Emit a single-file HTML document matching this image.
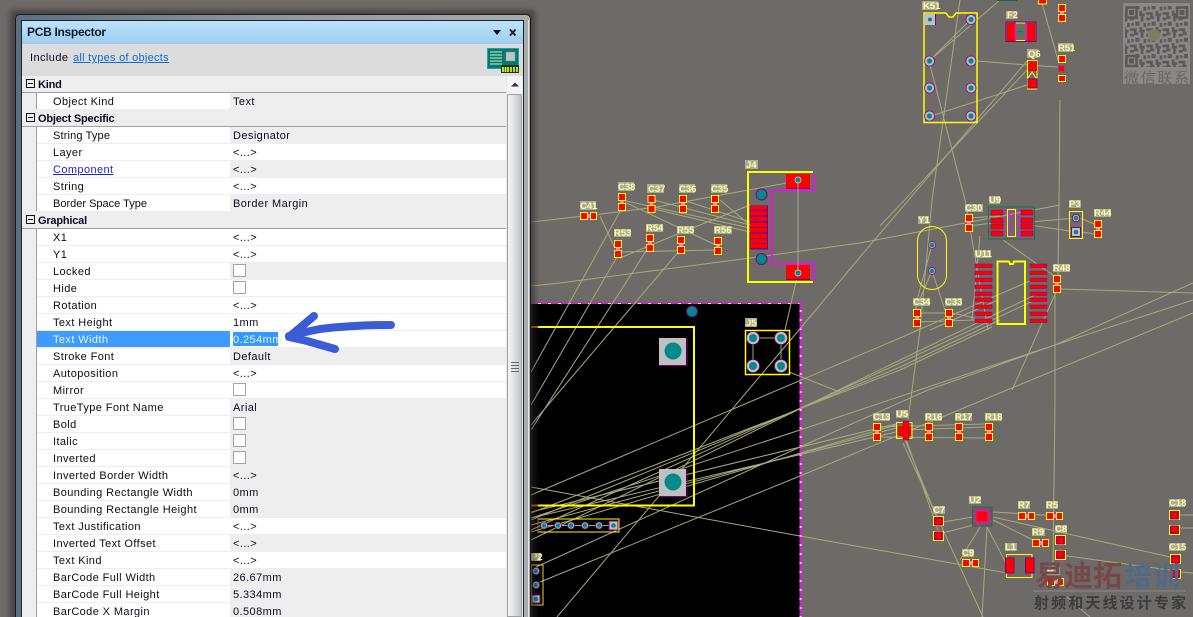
<!DOCTYPE html>
<html><head><meta charset="utf-8"><title>PCB Inspector</title>
<style>
html,body{margin:0;padding:0;width:1193px;height:617px;overflow:hidden;background:#6e6a68}
body{position:relative;font:11px/16px "Liberation Sans",sans-serif;color:#10081c}
div{position:absolute;box-sizing:border-box}
svg{position:absolute;left:0;top:0}
.r{left:37px;width:469px;height:17px;background:#fff;border-bottom:1px solid #eee}
.g{left:193px;right:0;top:0;height:16px;background:#eee;position:absolute}
.l{left:16px;top:1px;letter-spacing:.4px;white-space:nowrap}
.v{left:196px;top:1px;letter-spacing:.42px;white-space:nowrap}
.c{left:196px;top:1px;width:13px;height:13px;background:#fff;border:1px solid #a3a3a3}
.h{left:22px;width:484px;height:17px;background:#eee;border-bottom:1px solid #a0a0a0;font-weight:bold}
.h span{position:absolute;left:16px;top:1px;letter-spacing:-.2px}
.h i{position:absolute;left:4px;top:3px;width:9px;height:9px;border:1px solid #111;box-sizing:border-box}
.h i:after{content:"";position:absolute;left:1px;top:3px;width:5px;height:1px;background:#111}
.lb rect{fill:#aaaa96}
.lb text{fill:#ffffa0;font:bold 9.500px "Liberation Sans",sans-serif}
</style></head><body>

<svg width="1193" height="617" viewBox="0 0 1193 617">
<defs>
<g id="v"><rect x="1" y="6" width="6" height="6" fill="#a03a8a" stroke="#f0f"/><rect x=".5" y=".5" width="7" height="7" fill="#f00" stroke="#ff0"/><rect x=".5" y="10.500" width="7" height="7" fill="#f00" stroke="#ff0"/><path d="M2 9h4" stroke="#ffa"/></g>
<g id="h"><rect x="6" y="1" width="6" height="6" fill="#a03a8a" stroke="#f0f"/><rect x=".5" y=".5" width="7" height="7" fill="#f00" stroke="#ff0"/><rect x="10.500" y=".5" width="6" height="7" fill="#f00" stroke="#ff0"/><path d="M9 2v4" stroke="#ffa"/></g>
<g id="cv"><rect x=".5" y=".5" width="10" height="9" fill="#f00" stroke="#ff0"/><rect x=".5" y="15.500" width="10" height="9" fill="#f00" stroke="#ff0"/><rect x="2" y="2" width="7" height="7" fill="#f00" stroke="#800080"/><rect x="2" y="16" width="7" height="7" fill="#f00" stroke="#800080"/></g>
<g id="p"><circle r="5" fill="#bcbcbc" stroke="#900090" stroke-width=".8"/><circle r="2.600" fill="#008a8c"/></g>
<g id="b"><circle r="6.500" fill="#c0c0c0" stroke="#800080" stroke-width=".7"/><circle r="4" fill="#008a8c"/></g>
<g id="s"><circle r="3.500" fill="#bcbcbc" stroke="#900090" stroke-width=".8"/><circle r="2.300" fill="#008a8c"/></g>
<pattern id="qr" width="12" height="12" patternUnits="userSpaceOnUse" patternTransform="scale(1.35)">
<rect width="12" height="12" fill="#8b8987"/>
<path d="M0 0h3v2h-3zM5 0h2v4h-2zM9 1h3v2h-3zM1 4h3v3h-3zM7 5h2v3h-2zM10 5h2v2h-2zM0 9h2v3h-2zM4 8h2v2h-2zM4 10h4v2h-4zM9 9h3v2h-3z" fill="#5c5a58"/>
</pattern>
</defs>

<!-- board -->
<rect x="531" y="303" width="269" height="314" fill="#000"/>
<path d="M531 303.500H800" stroke="#d8d8d8" fill="none"/>
<path d="M531 303.500H800" stroke="#f0f" stroke-dasharray="7 3" fill="none"/>
<path d="M800.500 303V617" stroke="#e8e8e8" stroke-width="2" fill="none"/>
<path d="M800.500 303V617" stroke="#f0f" stroke-width="2" stroke-dasharray="7 2" fill="none"/>

<!-- ratlines -->
<g fill="none" stroke="#a9a87c" stroke-width="1">
<path d="M622 208L531 372M618 255L531 405M650 245L531 430M680 250L531 425"/>
<path d="M531 487L800 536L1007 573"/>
<path d="M557 617L820 305L860 257L1027 61"/>
<path d="M1027 70L880 226"/>
<path d="M531 495L900 338L1032 280M531 513L900 370L992 327M531 520L900 367L1000 320M531 530L900 363L1035 300M531 540L900 360L1035 295"/>
<path d="M536 567L800 447L928 390L1055 345L1193 283M531 518L800 430L928 387L1055 345L1193 300M540 582L800 476L1007 390L1193 313"/>
<path d="M531 525L896 428M531 532L896 425M531 518L896 432M531 512L896 424"/>
<path d="M531 222L593 215L657 207L710 197L787 183"/>
<path d="M600 216L618 255M618 199L720 247M650 199L750 225M650 208L750 232M680 199L750 222M622 200L750 228M720 200L750 225M620 258L680 233L750 205M620 252L716 250"/>
<path d="M531 286L560 283L750 258L860 243L1060 205"/>
<path d="M798 180V273M798 273L785 330M753 338H781M753 338V366M781 338V366M789 372L840 392"/>
<path d="M929 61L1000 0M971 19L929 61M960 0L932 200L920 330L908 420M929 61L965 200L988 330M931 116L1027 85M977 61L1027 65L1058 67M1041 0L1058 60M1060 100L1059 200L1058 275M1055 290V400L1053 567"/>
<path d="M930 330L998 300M952 313L975 318M916 313H952M916 322L975 320M932 245L917 300M932 271L945 310M932 271L915 310M969 218L1000 216M969 226L1000 222M1030 222L1076 218M1030 225L1076 232M1080 218L1094 224M1082 232L1094 234M1003 240L1057 278M980 236L972 320M1012 390L1057 290M1060 289L1193 293"/>
<path d="M877 427L985 424M877 437L985 438M904 430L985 427M905 440L938 520M903 443L983 617M905 436L938 530M943 522L973 517M943 533L973 525M980 527L960 560M987 527L982 617M987 527L1006 563M993 517L1170 557M993 512L1060 516M993 520L1033 540M1060 555L1170 570M1180 572L1193 573M1067 597L1090 617M1180 515H1193M1180 528H1193"/>
</g>

<!-- big box on board -->
<g shape-rendering="crispEdges">
<path d="M531 327H694V505.500H531" fill="none" stroke="#ff0" stroke-width="2"/>
<path d="M531 327H538M531 505.500H538" fill="none" stroke="#b85a10" stroke-width="2"/>
<rect x="659" y="338" width="27" height="27" fill="#c0c0c0"/><path d="M659 365.500H687V338" stroke="#800080" fill="none"/>
<rect x="659" y="469" width="27" height="27" fill="#c0c0c0"/><path d="M659 496.500H687V469" stroke="#800080" fill="none"/>
</g>
<circle cx="673" cy="351" r="8.500" fill="#008a8c"/><circle cx="673" cy="482" r="8.500" fill="#008a8c"/>
<circle cx="692" cy="311.500" r="5.500" fill="#008a8c" stroke="#800080"/>

<!-- J5 -->
<path d="M753 338H781V366M753 338V366" stroke="#a9a87c" fill="none"/>
<rect x="745.500" y="330.500" width="44" height="44" fill="none" stroke="#ff0" stroke-width="1.500"/>
<use href="#b" x="753" y="338"/><use href="#b" x="781" y="338"/><use href="#b" x="753" y="366"/><use href="#b" x="781" y="366"/>
<!-- row connector -->
<rect x="538" y="519" width="81" height="13" fill="none" stroke="#ff0"/>
<path d="M538 519v13" stroke="#b85a10"/>
<path d="M544 525.500H613" stroke="#a9a87c"/>
<use href="#s" x="544" y="525.500"/><use href="#s" x="558" y="525.500"/><use href="#s" x="571" y="525.500"/><use href="#s" x="585" y="525.500"/><use href="#s" x="599" y="525.500"/>
<rect x="609" y="521" width="9" height="9" fill="#c0c0c0" stroke="#800080"/><circle cx="613.500" cy="525.500" r="2.300" fill="#008a8c"/>
<!-- P2 -->
<rect x="531" y="565" width="12" height="40" fill="none" stroke="#e8d020"/>
<use href="#s" x="536" y="571"/><use href="#s" x="536" y="585"/>
<rect x="532" y="595" width="8" height="8" fill="#c0c0c0" stroke="#800080"/><circle cx="536" cy="599" r="2.300" fill="#008a8c"/>

<!-- J4 -->
<g shape-rendering="crispEdges">
<rect x="786" y="174" width="24" height="14" fill="#f00"/><rect x="786" y="188" width="24" height="1" fill="#800080"/>
<rect x="786" y="265" width="24" height="14" fill="#f00"/><rect x="786" y="279" width="24" height="1" fill="#800080"/>
<path d="M814 173V190H771.500V263.500H814V282" fill="none" stroke="#f0f" stroke-width="1.500"/>
<path d="M813 172H748V282H813" fill="none" stroke="#ff0" stroke-width="2"/>
<path d="M750 205.500h18v44h-18z" fill="#800080"/>
<path d="M750 206h17v3.500h-17zM750 211h17v4h-17zM750 217h17v4h-17zM750 223h17v4h-17zM750 228h17v4h-17zM750 234h17v4h-17zM750 239h17v4h-17zM750 244h17v4h-17z" fill="#f00"/>
</g>
<path d="M798 180V273" stroke="#a9a87c"/>
<circle cx="798" cy="180" r="3" fill="#008a8c" stroke="#bcbcbc"/><circle cx="798" cy="273" r="3" fill="#008a8c" stroke="#bcbcbc"/>
<circle cx="761.500" cy="194.500" r="5.500" fill="#008a8c" stroke="#800080"/><circle cx="761.500" cy="259" r="5.500" fill="#008a8c" stroke="#800080"/>

<!-- small parts -->
<use href="#v" x="618" y="193"/><use href="#v" x="647.500" y="195"/><use href="#v" x="679" y="195"/><use href="#v" x="711" y="195"/>
<use href="#h" x="580" y="212"/>
<use href="#v" x="614" y="240"/><use href="#v" x="646" y="234"/><use href="#v" x="677" y="236"/><use href="#v" x="714" y="237"/>
<use href="#v" x="965" y="214"/><use href="#v" x="1094" y="220"/><use href="#v" x="1053" y="275"/>
<use href="#v" x="913" y="309"/><use href="#v" x="945" y="309"/>
<use href="#v" x="873" y="423"/><use href="#v" x="925" y="423"/><use href="#v" x="955" y="423"/><use href="#v" x="985" y="423"/>
<use href="#h" x="1018" y="512"/><use href="#h" x="1046" y="512"/><use href="#h" x="1032" y="539"/><use href="#h" x="1047" y="578"/><use href="#h" x="962" y="559"/>
<use href="#cv" x="933" y="516"/><use href="#cv" x="1055" y="535"/>
<use href="#cv" x="1169" y="510"/><use href="#cv" x="1170" y="554"/>
<use href="#v" x="1058" y="4"/>
<rect x="1058.500" y="55.500" width="7" height="7" fill="#f00" stroke="#ff0"/><rect x="1058.500" y="65.500" width="6" height="6" fill="#f00" stroke="#a03a8a"/><rect x="1058.500" y="75.500" width="7" height="6" fill="#f00" stroke="#ff0"/>
<rect x="1038.500" y="-1" width="8" height="5" fill="#f00" stroke="#ff0"/>
<rect x="997" y="-1" width="20" height="2" fill="#0a6a4a"/>

<!-- K51 -->
<path d="M924 13H946L949 17H953L956 13H977V122.500H924Z" fill="none" stroke="#ff0" stroke-width="1.500"/>
<rect x="924" y="14" width="11" height="11" fill="#c0c0c0"/><path d="M935.500 14v11" stroke="#800080"/><circle cx="930" cy="19.500" r="2" fill="#008a8c"/>
<use href="#p" x="929.500" y="61"/><use href="#p" x="929.500" y="88"/><use href="#p" x="929.500" y="116"/>
<use href="#p" x="971" y="19.500"/><use href="#p" x="971" y="61"/><use href="#p" x="971" y="88"/><use href="#p" x="971" y="116"/>

<!-- F2 -->
<rect x="1006" y="22" width="30" height="19.500" fill="#6e6a68" stroke="#800080"/>
<rect x="1007" y="23" width="8" height="18" fill="#f00"/><rect x="1027" y="23" width="8" height="18" fill="#f00"/>
<rect x="1015.500" y="23" width="11" height="17.500" fill="none" stroke="#f0f"/>
<path d="M1016 23h9M1016 40.500h9" stroke="#ff0"/><path d="M1017 31.500h6M1020 28.500v6" stroke="#0a8a4a"/>
<!-- Q6 -->
<rect x="1027.500" y="60.500" width="9.500" height="28.500" fill="#6e6a68" stroke="#ff0"/>
<rect x="1028" y="61" width="9" height="10" fill="#f00"/><rect x="1028" y="79" width="9" height="9" fill="#f00" stroke="#800080"/>
<path d="M1028 78L1032 72L1036 78" fill="none" stroke="#ff0"/>

<!-- Y1 -->
<rect x="917.500" y="226.500" width="29" height="63" rx="14.500" fill="none" stroke="#ff0"/>
<use href="#s" x="932" y="245"/><use href="#s" x="932" y="271"/>

<!-- U9 -->
<rect x="988.500" y="207" width="46" height="32" fill="none" stroke="#0a7a4a"/>
<path d="M1003 209l30 30M1003 219l20 20M1009 209l24 24M1018 209l15 15M1003 229l10 10" stroke="#f0f" fill="none"/>
<path d="M991 210h12v5h-12zM991 218h12v5h-12zM991 224h12v5h-12zM991 231h12v5h-12zM1021 210h12v5h-12zM1021 218h12v5h-12zM1021 224h12v5h-12zM1021 231h12v5h-12z" fill="#f00" stroke="#800080" stroke-width=".5"/>
<rect x="1007.500" y="209.500" width="8" height="27" fill="none" stroke="#ff0"/>
<!-- P3 -->
<rect x="1069.500" y="211.500" width="13" height="27" fill="none" stroke="#ff0"/>
<circle cx="1076" cy="218" r="3.800" fill="#bcbcbc" stroke="#800080"/><circle cx="1076" cy="218" r="2.300" fill="#008a8c"/>
<rect x="1071.500" y="227.500" width="9" height="9" fill="#c0c0c0" stroke="#800080"/><circle cx="1076" cy="232" r="2.300" fill="#008a8c"/>

<!-- U11 -->
<path d="M997.500 261.500H1009L1010 264H1013L1014 261.500H1025V324H997.500Z" fill="none" stroke="#ff0" stroke-width="2"/>
<path d="M975 264h17v3.500h-17zM975 271h17v3.500h-17zM975 278h17v3.500h-17zM975 285h17v3.500h-17zM975 292h17v3.500h-17zM975 298h17v3.500h-17zM975 305h17v3.500h-17zM975 312h17v3.500h-17zM975 319h17v3.500h-17zM1030 264h17v3.500h-17zM1030 271h17v3.500h-17zM1030 278h17v3.500h-17zM1030 285h17v3.500h-17zM1030 292h17v3.500h-17zM1030 298h17v3.500h-17zM1030 305h17v3.500h-17zM1030 312h17v3.500h-17zM1030 319h17v3.500h-17z" fill="#f00" stroke="#800080" stroke-width=".5"/>

<!-- U5 -->
<rect x="896.500" y="422.500" width="15.500" height="16" fill="none" stroke="#ff0"/>
<rect x="898" y="426" width="13" height="10" fill="#f00"/><rect x="903" y="421" width="6" height="19" fill="#f00" stroke="#800080" stroke-width=".5"/>
<!-- U2 -->
<rect x="972.500" y="507" width="19.500" height="19" fill="#8a4a5a" stroke="#0a7a4a"/>
<rect x="976" y="511" width="12" height="11" fill="#f00" stroke="#f0f"/>
<!-- L1 -->
<rect x="1006.500" y="554.500" width="25.500" height="23" fill="none" stroke="#ff0"/>
<rect x="1005.500" y="558" width="8.500" height="15" fill="#f00" stroke="#800080"/><rect x="1025.500" y="558" width="8.500" height="15" fill="#f00" stroke="#800080"/>

<!-- labels -->
<g class="lb" shape-rendering="crispEdges">
<rect x="922" y="1" width="16" height="9"/><rect x="1006" y="11" width="11" height="8"/><rect x="1027" y="49" width="11" height="9"/><rect x="1058" y="43" width="15" height="9"/>
<rect x="745" y="160" width="13" height="9"/><rect x="618" y="182" width="16" height="9"/><rect x="647" y="184" width="17" height="9"/><rect x="679" y="184" width="16" height="9"/><rect x="711" y="184" width="16" height="9"/><rect x="580" y="201" width="16" height="9"/>
<rect x="614" y="229" width="17" height="8"/><rect x="646" y="224" width="17" height="8"/><rect x="677" y="226" width="17" height="8"/><rect x="714" y="226" width="18" height="8"/>
<rect x="745" y="318" width="12" height="9"/><rect x="531" y="553" width="10" height="8"/>
<rect x="965" y="204" width="18" height="8"/><rect x="989" y="196" width="11" height="8"/><rect x="1069" y="200" width="12" height="8"/><rect x="1094" y="209" width="17" height="8"/><rect x="918" y="216" width="11" height="8"/><rect x="975" y="250" width="16" height="8"/><rect x="1053" y="264" width="17" height="8"/><rect x="913" y="298" width="17" height="8"/><rect x="945" y="298" width="17" height="8"/>
<rect x="873" y="413" width="17" height="8"/><rect x="896" y="410" width="12" height="8"/><rect x="925" y="413" width="17" height="8"/><rect x="955" y="413" width="17" height="8"/><rect x="985" y="413" width="17" height="8"/>
<rect x="969" y="496" width="12" height="8"/><rect x="933" y="506" width="12" height="8"/><rect x="962" y="549" width="12" height="8"/><rect x="1005" y="543" width="12" height="8"/><rect x="1018" y="501" width="12" height="8"/><rect x="1046" y="501" width="12" height="8"/><rect x="1055" y="525" width="12" height="8"/><rect x="1032" y="528" width="13" height="8"/><rect x="1047" y="567" width="13" height="8"/><rect x="1169" y="499" width="16" height="8"/><rect x="1169" y="543" width="16" height="8"/>
</g>
<g class="lb">
<text x="923" y="9">K51</text><text x="1007" y="18">F2</text><text x="1028" y="57">Q6</text><text x="1058" y="51">R51</text>
<text x="746" y="168">J4</text><text x="618" y="190">C38</text><text x="648" y="192">C37</text><text x="679" y="192">C36</text><text x="711" y="192">C35</text><text x="580" y="209">C41</text>
<text x="614" y="236">R53</text><text x="646" y="231">R54</text><text x="677" y="233">R55</text><text x="714" y="233">R56</text>
<text x="746" y="326">J5</text><text x="531" y="560">P2</text>
<text x="965" y="211">C30</text><text x="989" y="203">U9</text><text x="1069" y="207">P3</text><text x="1094" y="216">R44</text><text x="918" y="223">Y1</text><text x="975" y="257">U11</text><text x="1053" y="271">R48</text><text x="913" y="305">C34</text><text x="945" y="305">C33</text>
<text x="873" y="420">C13</text><text x="896" y="417">U5</text><text x="925" y="420">R16</text><text x="955" y="420">R17</text><text x="985" y="420">R18</text>
<text x="969" y="503">U2</text><text x="933" y="513">C7</text><text x="962" y="556">C9</text><text x="1005" y="550">L1</text><text x="1018" y="508">R7</text><text x="1046" y="508">R5</text><text x="1055" y="532">C8</text><text x="1032" y="535">R9</text><text x="1047" y="574">R2</text><text x="1169" y="506">C18</text><text x="1169" y="550">C15</text>
</g>

<!-- QR watermark -->
<rect x="1123" y="3" width="67" height="81" fill="#8b8987"/>
<rect x="1125" y="6" width="63" height="61" fill="url(#qr)"/>
<g fill="#8b8987" stroke="#5c5a58" stroke-width="2.500">
<rect x="1126.500" y="7.500" width="10" height="10"/><rect x="1177" y="7.500" width="10" height="10"/><rect x="1126.500" y="56" width="10" height="10"/>
</g>
<path d="M1129 10h5v5h-5zM1179.500 10h5v5h-5zM1129 58.500h5v5h-5z" fill="#5c5a58"/>
<circle cx="1154" cy="35" r="6" fill="#807e5e"/>
<text x="1124" y="83" font-size="15" fill="#6a6866" textLength="65" style='font-family:"Liberation Sans","Noto Sans CJK SC",sans-serif'>微信联系</text>

<!-- bottom watermark -->
<text x="1035" y="586" font-size="29" font-weight="bold" fill="#75494a" textLength="87" style='font-family:"Liberation Sans","Noto Sans CJK SC",sans-serif'>易迪拓</text>
<text x="1125" y="586" font-size="27" font-weight="bold" fill="#4d6a8a" textLength="55" style='font-family:"Liberation Sans","Noto Sans CJK SC",sans-serif'>培训</text>
<path d="M1033 591H1185" stroke="#8a8a8a"/>
<text x="1034" y="608" font-size="15" font-weight="bold" fill="#3c3c3e" textLength="152" style='font-family:"Liberation Sans","Noto Sans CJK SC",sans-serif'>射频和天线设计专家</text>
</svg>

<!-- window shadow + frame -->
<div style="left:10px;top:10px;width:525px;height:620px;background:#2c2b2b;filter:blur(3px);opacity:.6"></div>
<div style="left:15px;top:14px;width:516px;height:610px;background:linear-gradient(90deg,#5a7082,#8f979e 50%,#a6acb0);border:1px solid #1c1c1c;border-radius:5px 5px 0 0"></div>
<div style="left:21px;top:20px;width:503px;height:600px;background:#222"></div>
<div style="left:528px;top:20px;width:1px;height:600px;background:#e4e8ea"></div>

<!-- panel -->
<div style="left:22px;top:21px;width:501px;height:596px;background:#eee;overflow:hidden"></div>
<div style="left:22px;top:21px;width:501px;height:23px;background:linear-gradient(#bce3fc,#9ecdf0)"></div>
<div style="left:27px;top:24px;font-size:12px;font-weight:bold;letter-spacing:-.3px;color:#0c1c28;white-space:nowrap">PCB Inspector</div>
<svg width="1193" height="617" style="pointer-events:none">
<path d="M493 30h8l-4 5z" fill="#111"/>
<path d="M510 29.500l5.500 6M515.500 29.500l-5.500 6" stroke="#222" stroke-width="2" fill="none"/>
</svg>
<div style="left:22px;top:44px;width:501px;height:32px;background:#dcdcdc"></div>
<div style="left:30px;top:50px;letter-spacing:.42px;white-space:nowrap">Include</div>
<div style="left:73px;top:50px;letter-spacing:.27px;white-space:nowrap;color:#0a6ed0;text-decoration:underline">all types of objects</div>
<svg width="1193" height="617">
<rect x="487.500" y="48.500" width="31" height="20" fill="#067a6a" stroke="#1aa0b8"/>
<path d="M490 52h12M490 55h12M490 58h12M490 61h12M490 64h12" stroke="#d8f0c8"/>
<rect x="506" y="52" width="9" height="9" fill="#c4c4c4" stroke="#888" stroke-width=".5"/>
<rect x="501" y="65" width="18" height="8" fill="#0a3a30"/>
<path d="M503 67v5M505.500 67v5M508 67v5M511 67v5M514 67v5M517 67v5" stroke="#ff0" stroke-width="1.600"/>
</svg>

<!-- grid -->
<div class="h" style="top:76px"><i></i><span>Kind</span></div>
<div class="r" style="top:93px"><div class="g"></div><div class="l">Object Kind</div><div class="v">Text</div></div>
<div class="h" style="top:110px"><i></i><span>Object Specific</span></div>
<div class="r" style="top:127px"><div class="g"></div><div class="l" style="letter-spacing:.15px">String Type</div><div class="v">Designator</div></div>
<div class="r" style="top:144px"><div class="l">Layer</div><div class="v">&lt;...&gt;</div></div>
<div class="r" style="top:161px"><div class="g"></div><div class="l" style="color:#2222cc;text-decoration:underline">Component</div><div class="v">&lt;...&gt;</div></div>
<div class="r" style="top:178px"><div class="l">String</div><div class="v">&lt;...&gt;</div></div>
<div class="r" style="top:195px"><div class="g"></div><div class="l" style="letter-spacing:0">Border Space Type</div><div class="v">Border Margin</div></div>
<div class="h" style="top:212px"><i></i><span>Graphical</span></div>
<div class="r" style="top:229px"><div class="l">X1</div><div class="v">&lt;...&gt;</div></div>
<div class="r" style="top:246px"><div class="l">Y1</div><div class="v">&lt;...&gt;</div></div>
<div class="r" style="top:263px"><div class="g"></div><div class="l">Locked</div><div class="c"></div></div>
<div class="r" style="top:280px"><div class="l">Hide</div><div class="c"></div></div>
<div class="r" style="top:297px"><div class="l">Rotation</div><div class="v">&lt;...&gt;</div></div>
<div class="r" style="top:314px"><div class="l">Text Height</div><div class="v">1mm</div></div>
<div class="r" style="top:331px"><div style="left:0;top:0;width:193px;height:16px;background:#3f9bff"></div><div class="l" style="color:#e8f4ff">Text Width</div><div style="left:196px;top:1px;width:45px;height:14px;background:#3399ff"></div><div class="v" style="color:#e8f4ff">0.254mm</div></div>
<div class="r" style="top:348px"><div class="g"></div><div class="l">Stroke Font</div><div class="v">Default</div></div>
<div class="r" style="top:365px"><div class="l">Autoposition</div><div class="v">&lt;...&gt;</div></div>
<div class="r" style="top:382px"><div class="l">Mirror</div><div class="c"></div></div>
<div class="r" style="top:399px"><div class="g"></div><div class="l">TrueType Font Name</div><div class="v">Arial</div></div>
<div class="r" style="top:416px"><div class="g"></div><div class="l">Bold</div><div class="c"></div></div>
<div class="r" style="top:433px"><div class="g"></div><div class="l">Italic</div><div class="c"></div></div>
<div class="r" style="top:450px"><div class="g"></div><div class="l">Inverted</div><div class="c"></div></div>
<div class="r" style="top:467px"><div class="g"></div><div class="l">Inverted Border Width</div><div class="v">&lt;...&gt;</div></div>
<div class="r" style="top:484px"><div class="g"></div><div class="l">Bounding Rectangle Width</div><div class="v">0mm</div></div>
<div class="r" style="top:501px"><div class="g"></div><div class="l">Bounding Rectangle Height</div><div class="v">0mm</div></div>
<div class="r" style="top:518px"><div class="l">Text Justification</div><div class="v">&lt;...&gt;</div></div>
<div class="r" style="top:535px"><div class="g"></div><div class="l">Inverted Text Offset</div><div class="v">&lt;...&gt;</div></div>
<div class="r" style="top:552px"><div class="l">Text Kind</div><div class="v">&lt;...&gt;</div></div>
<div class="r" style="top:569px"><div class="g"></div><div class="l">BarCode Full Width</div><div class="v">26.67mm</div></div>
<div class="r" style="top:586px"><div class="g"></div><div class="l">BarCode Full Height</div><div class="v">5.334mm</div></div>
<div class="r" style="top:603px"><div class="g"></div><div class="l">BarCode X Margin</div><div class="v">0.508mm</div></div>
<div style="left:36px;top:93px;width:1px;height:16px;background:#a0a0a0"></div>
<div style="left:36px;top:127px;width:1px;height:84px;background:#a0a0a0"></div>
<div style="left:36px;top:229px;width:1px;height:388px;background:#a0a0a0"></div>

<!-- scrollbar -->
<div style="left:506px;top:76px;width:17px;height:541px;background:#e8e8e8"></div>
<div style="left:507px;top:76px;width:15px;height:18px;background:#f4f4f4"></div>
<div style="left:507px;top:94px;width:15px;height:523px;background:linear-gradient(90deg,#f6f6f6,#e2e2e2 45%,#c4c4c6);border:1px solid #a0a0a0;border-radius:2px 2px 0 0"></div>
<svg width="1193" height="617">
<path d="M515 82.500l4 4h-8z" fill="#333"/>
<path d="M511 362.500h8M511 365.500h8M511 368.500h8M511 371.500h8" stroke="#666" fill="none"/>
<path d="M391 325C370 325 345 326 320 329C310 331 300 333 289 336" fill="none" stroke="#3a5cd4" stroke-width="8" stroke-linecap="round" stroke-linejoin="round"/>
<path d="M314 316L289 337L307 341L335 349" fill="none" stroke="#3a5cd4" stroke-width="8" stroke-linecap="round" stroke-linejoin="round"/>
</svg>
</body></html>
